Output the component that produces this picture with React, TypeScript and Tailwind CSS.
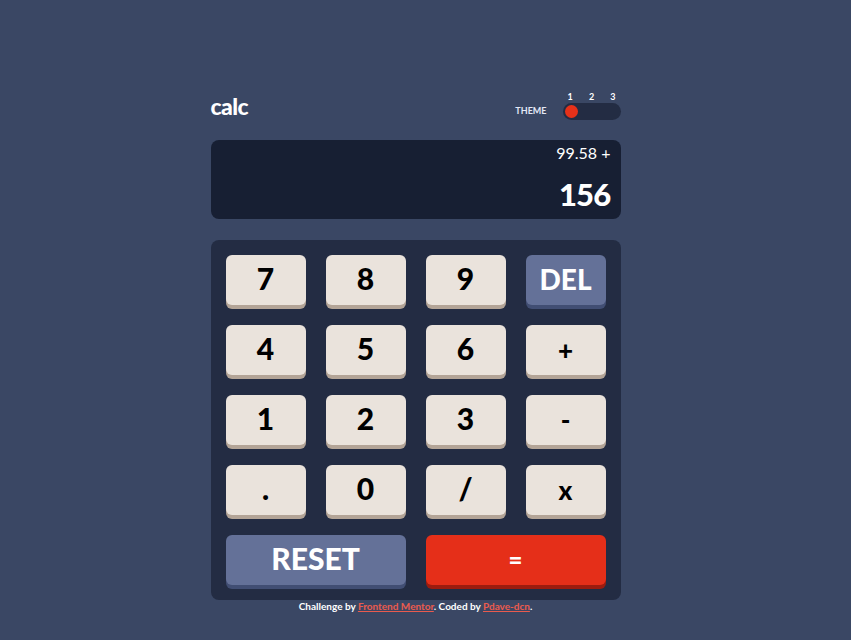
import React from "react";

const keys: { label: string; kind?: "del" | "op" }[] = [
  { label: "7" },
  { label: "8" },
  { label: "9" },
  { label: "DEL", kind: "del" },
  { label: "4" },
  { label: "5" },
  { label: "6" },
  { label: "+", kind: "op" },
  { label: "1" },
  { label: "2" },
  { label: "3" },
  { label: "-", kind: "op" },
  { label: "." },
  { label: "0" },
  { label: "/" },
  { label: "x", kind: "op" },
];

export default function App() {
  return (
    <div className="min-h-[640px] w-full bg-[#3a4764] font-['Lato','Liberation_Sans',sans-serif] pt-[92px]">
      <div className="mx-auto w-[410px] -translate-x-[10px]">
        {/* header */}
        <div className="flex items-end justify-between">
          <h1 className="text-[23px] font-black leading-none text-white mb-[2px] tracking-tight">calc</h1>
          <div className="flex items-end gap-4">
            <span className="text-[9px] font-bold text-[#e3e8f5] mb-[3px]">THEME</span>
            <div className="flex flex-col gap-[1px]">
              <div className="flex justify-between px-[5px] text-[9px] font-bold leading-[10px] text-white">
                <span>1</span>
                <span>2</span>
                <span>3</span>
              </div>
              <div className="w-[58px] h-[17px] rounded-full bg-[#232c43] p-[2px] flex items-center">
                <div className="w-[13px] h-[13px] rounded-full bg-[#e63119]" />
              </div>
            </div>
          </div>
        </div>

        {/* display */}
        <div className="mt-[20px] h-[79px] rounded-lg bg-[#171f33] px-[10px] pt-[1px] flex flex-col items-end text-white">
          <span className="text-[16px] leading-[24px]">99.58 +</span>
          <span className="mt-[11px] text-[31px] font-black leading-[36px] tracking-tight">156</span>
        </div>

        {/* keypad */}
        <div className="mt-[21px] rounded-lg bg-[#232c43] p-[15px] grid grid-cols-4 gap-[20px]">
          {keys.map((k) =>
            k.kind === "del" ? (
              <button
                key={k.label}
                className="h-[50px] rounded-md bg-[#647198] shadow-[0_4px_0_#414e73] pb-[3px] text-[28px] font-black text-white"
              >
                {k.label}
              </button>
            ) : (
              <button
                key={k.label}
                className={
                  k.kind === "op"
                    ? "h-[50px] rounded-md bg-[#eae3dc] shadow-[0_4px_0_#b3a497] text-[26px] font-black text-black"
                    : "h-[50px] rounded-md bg-[#eae3dc] shadow-[0_4px_0_#b3a497] pb-[3px] text-[30px] font-black text-black"
                }
              >
                {k.label}
              </button>
            )
          )}
          <button className="col-span-2 h-[50px] rounded-md bg-[#647198] shadow-[0_4px_0_#414e73] pb-[3px] text-[30px] font-black text-white">
            RESET
          </button>
          <button className="col-span-2 h-[50px] rounded-md bg-[#e52f19] shadow-[0_4px_0_#9c1c0f] text-[24px] font-black text-white">
            =
          </button>
        </div>

        {/* footer */}
        <p className="text-center text-[10px] font-bold leading-[12px] text-white">
          Challenge by{" "}
          <a className="text-[#ea5b4e] underline">Frontend Mentor</a>. Coded by{" "}
          <a className="text-[#ea5b4e] underline">Pdave-dcn</a>.
        </p>
      </div>
    </div>
  );
}
